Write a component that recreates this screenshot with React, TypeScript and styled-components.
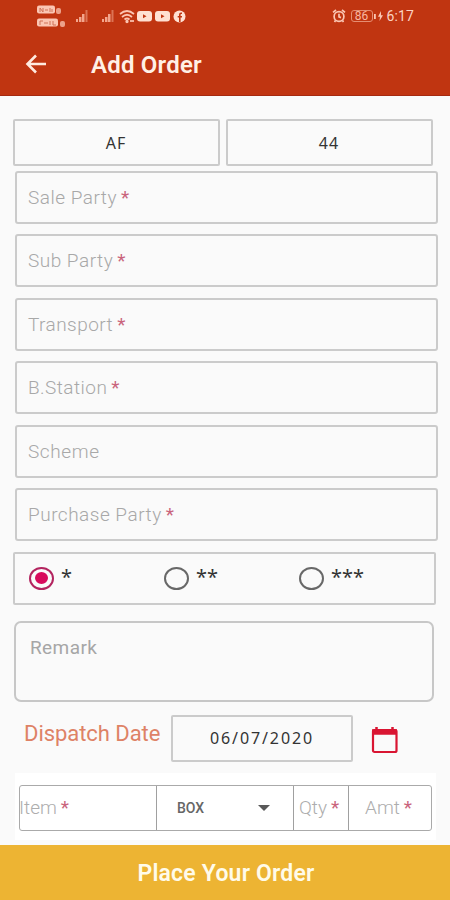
import React from "react";
import styled, { createGlobalStyle } from "styled-components";

const GlobalStyle = createGlobalStyle`
  *, *::before, *::after { box-sizing: border-box; }
  body { margin: 0; background: #fafafa; font-family: Roboto, "Liberation Sans", sans-serif; }
`;

const Screen = styled.div`
  width: 450px;
  height: 900px;
  overflow: hidden;
  display: flex;
  flex-direction: column;
  background: #fafafa;
`;

const Header = styled.header`
  flex: none;
  height: 96px;
  background: #c03511;
  border-bottom: 1px solid #a52a10;
  color: #fff0e6;
`;

const StatusBar = styled.div`
  height: 32px;
  padding: 0 36px 0 37px;
  display: flex;
  justify-content: space-between;
  color: #fbd3c2;
`;

const StatusGroup = styled.div`
  display: flex;
  align-items: center;
  height: 32px;
`;

const Clock = styled.span`
  font-size: 14px;
  line-height: 32px;
  letter-spacing: 0.1px;
  margin-left: 3px;
`;

const TitleBar = styled.div`
  display: flex;
  align-items: center;
  height: 64px;
  padding-left: 25px;
`;

const Title = styled.h1`
  margin: 2px 0 0 44px;
  font-size: 24px;
  font-weight: 600;
  line-height: 30px;
  letter-spacing: 0.2px;
`;

const Form = styled.main`
  flex: 1;
  display: flex;
  flex-direction: column;
  padding-top: 23px;
`;

const CodeRow = styled.div`
  display: grid;
  grid-template-columns: 207px 207px;
  gap: 6px;
  padding-left: 12.5px;
`;

const ValueBox = styled.div<{ $spacing?: number }>`
  height: 47px;
  border: 2px solid #cbcbcb;
  border-radius: 2px;
  display: flex;
  align-items: center;
  justify-content: center;
  font-family: "Noto Sans", sans-serif;
  font-size: 16px;
  color: #333;
  letter-spacing: ${(p) => p.$spacing ?? 0}px;
`;

const Fields = styled.div`
  display: grid;
  grid-auto-rows: 53px;
  gap: 10.4px;
  padding: 5px 12px 0 15px;
`;

const Field = styled.div`
  border: 2px solid #cbcbcb;
  border-radius: 3px;
  display: flex;
  align-items: center;
  padding-left: 11px;
  font-size: 19px;
  font-weight: 300;
  color: #a8a8a8;
  white-space: pre;
`;

const FieldLabel = styled.span<{ $spacing: number }>`
  letter-spacing: ${(p) => p.$spacing}px;
`;

const Required = styled.span`
  color: #c9647c;
  font-weight: 400;
  margin-left: 4px;
`;

const RatingBox = styled.div`
  margin: 11px 14px 0 13px;
  height: 53px;
  border: 2px solid #cbcbcb;
  border-radius: 2px;
  display: grid;
  grid-template-columns: 135px 135px 1fr;
  align-items: center;
  padding-left: 14px;
`;

const RatingOption = styled.label`
  display: flex;
  align-items: center;
  gap: 7px;
`;

const Radio = styled.span<{ $on?: boolean }>`
  width: 25px;
  height: 23px;
  border-radius: 50%;
  border: 2px solid ${(p) => (p.$on ? "#b3245f" : "#686868")};
  display: grid;
  place-items: center;
  &::after {
    content: "";
    width: 13px;
    height: 12px;
    border-radius: 50%;
    background: ${(p) => (p.$on ? "#d80b5d" : "transparent")};
  }
`;

const Stars = styled.span`
  font-family: "Noto Sans", sans-serif;
  font-size: 20px;
  line-height: 24px;
  margin-top: -2px;
  color: #333;
`;

const Remark = styled.div`
  margin: 16px 16px 0 14px;
  height: 81px;
  border: 2px solid #c7c7c7;
  border-radius: 7px;
  padding: 13px 14px;
  font-size: 19px;
  line-height: 23px;
  letter-spacing: 0.4px;
  color: #a6a6a6;
`;

const DispatchRow = styled.div`
  display: flex;
  align-items: center;
  height: 47px;
  margin-top: 13px;
  padding-left: 24px;
`;

const DispatchLabel = styled.span`
  width: 147px;
  margin-top: -10px;
  font-size: 22px;
  letter-spacing: -0.05px;
  color: #de8266;
  white-space: nowrap;
`;

const DateBox = styled(ValueBox)`
  width: 182px;
  margin-right: 18px;
`;

const ItemPanel = styled.div`
  margin: 11px 14px 0 15px;
  padding: 12px 4px 9px;
  background: #fff;
`;

const ItemRow = styled.div`
  display: grid;
  grid-template-columns: 136px 137px 55px 1fr;
  height: 46px;
  border: 1px solid #aaa;
  border-radius: 3px;
`;

const Cell = styled.div<{ $pad: number }>`
  display: flex;
  align-items: center;
  padding-left: ${(p) => p.$pad}px;
  overflow: hidden;
  font-size: 19px;
  font-weight: 300;
  color: #adadad;
  white-space: nowrap;
  & + & { border-left: 1px solid #a0a0a0; }
`;

const ItemLabel = styled.span`
  margin-left: -1px;
`;

const Unit = styled.span`
  width: 81px;
  font-size: 14px;
  font-weight: 500;
  color: #666;
`;

const SubmitBar = styled.button`
  flex: none;
  height: 55px;
  border: 0;
  padding: 2px 0 0 2px;
  background: #edb433;
  color: #fffbea;
  font-family: Roboto, sans-serif;
  font-size: 23px;
  font-weight: 600;
  letter-spacing: 0.2px;
`;

const Signal = () => (
  <svg width="14" height="14" viewBox="0 0 14 14" fill="#f3a58c">
    <path d="M1 10h2v3H1zM4 8h2.500v5H4zM7 5h2.500v8H7z" />
    <path d="M10.500 1h2v12h-2z" opacity=".55" />
  </svg>
);

const CarrierTags = () => (
  <svg width="31" height="24" viewBox="0 0 31 24">
    <g fill="#fbc6b3">
      <rect x="0" y="1.500" width="18" height="8" rx="2" />
      <rect x="19" y="4" width="5" height="6" rx="2" opacity=".75" />
      <rect x="0" y="14.500" width="21" height="8" rx="2" />
      <rect x="23" y="17" width="5" height="6" rx="2" opacity=".75" />
    </g>
    <path d="M3 4v4M3 4l3 4V4M8 6h3M13 4v4M15 5v3M3 17v4M3 17h3M7 19h4M13 17v4M16 17v4h3" stroke="#cf7358" fill="none" />
  </svg>
);

const Wifi = () => (
  <svg width="16" height="15" viewBox="0 0 16 15" fill="none" stroke="#fbc6b3" strokeWidth="1.7">
    <path d="M1 5q7-6 14 0M3 8q5-4.500 10 0M5.500 10.500q2.500-2 5 0" />
    <circle cx="8" cy="12.500" r=".8" fill="#fbc6b3" />
    <path d="M11 12h4" />
  </svg>
);

const Video = () => (
  <svg width="15" height="12" viewBox="0 0 15 12">
    <rect x="0" y="1" width="15" height="10.500" rx="3" fill="#ffe0d2" />
    <path d="M6 4.200v4l3.500-2z" fill="#c03511" />
  </svg>
);

const Social = () => (
  <svg width="13" height="13" viewBox="0 0 13 13">
    <circle cx="6.500" cy="6.500" r="6" fill="#ffe0d2" />
    <path d="M9 3.200H8Q6.800 3.200 6.800 4.700V12M4.700 6.700H9" stroke="#c03511" strokeWidth="1.600" fill="none" />
  </svg>
);

const Alarm = () => (
  <svg width="14" height="14" viewBox="0 0 14 14" fill="none" stroke="#fbc6b3" strokeWidth="1.700">
    <circle cx="7" cy="7.500" r="4.900" />
    <path d="M1 3.300L4 1M13 3.300L10 1M7 4.800v3l2 .8M3.500 11.500L2.500 13M10.500 11.500l1 1.500" />
  </svg>
);

const BatteryShell = styled.span`
  width: 22px;
  height: 12px;
  margin-left: 5px;
  border: 1px solid #e58d72;
  border-radius: 3px;
  font-size: 12px;
  line-height: 11px;
  text-align: center;
  color: #f8b8a3;
`;

const Charge = () => (
  <svg width="11" height="12" viewBox="0 0 11 12" fill="#fbc6b3">
    <path d="M1 4h1.800v5H1zM8 1L5 6.800h2L6.500 11 10 5.200H8z" />
  </svg>
);

const BackArrow = () => (
  <svg width="22" height="20" viewBox="0 0 22 20" fill="none" stroke="#ffeadf" strokeWidth="2.600">
    <path d="M21 10H2.500M11 1.500L2.500 10 11 18.500" />
  </svg>
);

const Caret = () => (
  <svg width="12" height="6" viewBox="0 0 12 6"><path d="M0 0h12L6 6z" fill="#585858" /></svg>
);

const CalendarSvg = styled.svg`
  margin-top: 4px;
`;

const CalendarIcon = () => (
  <CalendarSvg width="27" height="28" viewBox="0 0 27 28" fill="none" stroke="#d91532">
    <rect x="2" y="4" width="23.500" height="22" rx="1.500" strokeWidth="2.200" />
    <path d="M1 6h25" strokeWidth="5.500" />
    <path d="M5.500 1v5M21.500 1v5" strokeWidth="2.500" />
  </CalendarSvg>
);

const StatusLeft = styled(StatusGroup)`
  & > svg:nth-child(2) { margin-left: 7px; }
  & > svg:nth-child(3) { margin-left: 12px; }
  & > svg:nth-child(4) { margin-left: 4px; }
  & > svg:nth-child(5) { margin-left: 2px; }
  & > svg:nth-child(6) { margin-left: 3px; }
  & > svg:nth-child(7) { margin-left: 3px; }
`;

const fields = [
  { label: "Sale Party", required: true, spacing: 0.5 },
  { label: "Sub Party", required: true, spacing: 0.5 },
  { label: "Transport", required: true, spacing: 0.45 },
  { label: "B.Station", required: true, spacing: 0.45 },
  { label: "Scheme", required: false, spacing: 0.6 },
  { label: "Purchase Party", required: true, spacing: 0.5 },
];

export default function App() {
  return (
    <>
      <GlobalStyle />
      <Screen>
        <Header>
          <StatusBar>
            <StatusLeft>
              <CarrierTags /><Signal /><Signal /><Wifi /><Video /><Video /><Social />
            </StatusLeft>
            <StatusGroup>
              <Alarm /><BatteryShell>86</BatteryShell><Charge /><Clock>6:17</Clock>
            </StatusGroup>
          </StatusBar>
          <TitleBar><BackArrow /><Title>Add Order</Title></TitleBar>
        </Header>
        <Form>
          <CodeRow>
            <ValueBox $spacing={1}>AF</ValueBox>
            <ValueBox $spacing={1}>44</ValueBox>
          </CodeRow>
          <Fields>
            {fields.map((f) => (
              <Field key={f.label}>
                <FieldLabel $spacing={f.spacing}>{f.label}</FieldLabel>
                {f.required && <Required>*</Required>}
              </Field>
            ))}
          </Fields>
          <RatingBox>
            <RatingOption><Radio $on /><Stars>*</Stars></RatingOption>
            <RatingOption><Radio /><Stars>**</Stars></RatingOption>
            <RatingOption><Radio /><Stars>***</Stars></RatingOption>
          </RatingBox>
          <Remark>Remark</Remark>
          <DispatchRow>
            <DispatchLabel>Dispatch Date</DispatchLabel>
            <DateBox $spacing={1.9}>06/07/2020</DateBox>
            <CalendarIcon />
          </DispatchRow>
          <ItemPanel>
            <ItemRow>
              <Cell $pad={0}><ItemLabel>Item</ItemLabel><Required>*</Required></Cell>
              <Cell $pad={20}><Unit>BOX</Unit><Caret /></Cell>
              <Cell $pad={5}>Qty<Required>*</Required></Cell>
              <Cell $pad={16}>Amt<Required>*</Required></Cell>
            </ItemRow>
          </ItemPanel>
        </Form>
        <SubmitBar>Place Your Order</SubmitBar>
      </Screen>
    </>
  );
}
